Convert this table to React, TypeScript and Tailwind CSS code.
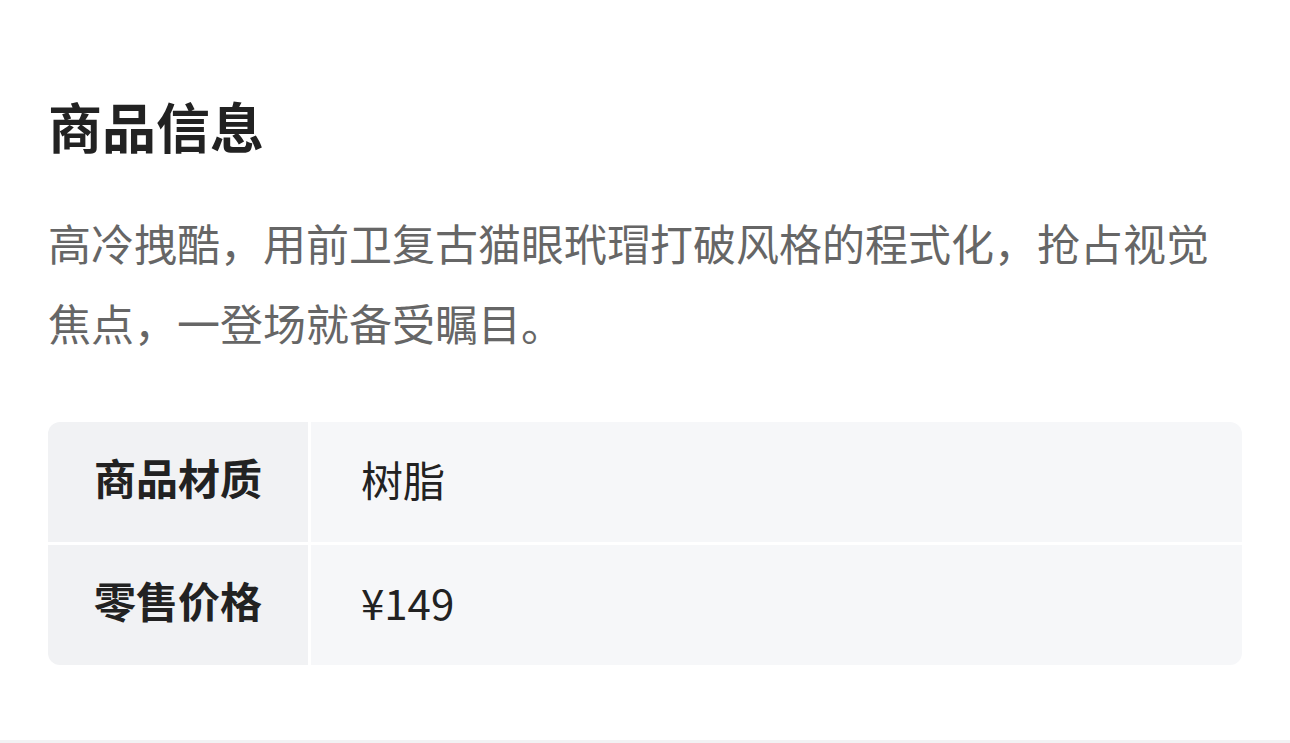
const rows = [
  { label: "商品材质", value: "树脂" },
  { label: "零售价格", value: "¥149" },
];

const App = () => {
  return (
    <div
      className="w-[1290px] h-[743px] bg-white flex flex-col"
      style={{ fontFamily: '"Noto Sans CJK SC", "Noto Sans", sans-serif' }}
    >
      <div className="flex-1 px-12">
        {/* Title */}
        <h2 className="pt-[86px] text-[54px] leading-[80px] font-bold text-[#222222]">
          商品信息
        </h2>

        {/* Description */}
        <p className="mt-[36px] text-[43px] leading-[80px] text-[#666666]">
          高冷拽酷，用前卫复古猫眼玳瑁打破风格的程式化，抢占视觉焦点，一登场就备受瞩目。
        </p>

        {/* Spec table */}
        <div className="mt-[60px] rounded-[12px] overflow-hidden flex flex-col gap-[3px]">
          {rows.map((row) => (
            <div key={row.label} className="grid grid-cols-[260px_1fr] gap-[3px] h-[120px]">
              <div className="bg-[#f1f2f4] flex items-center justify-center pb-[12px] text-[42px] font-bold text-[#222222]">
                {row.label}
              </div>
              <div className="bg-[#f6f7f9] flex items-center pl-[50px] pb-[8px] text-[42px] text-[#222222]">
                {row.value}
              </div>
            </div>
          ))}
        </div>
      </div>
      <div className="h-[3px] bg-[#f2f2f3]" />
    </div>
  );
};

export default App;
